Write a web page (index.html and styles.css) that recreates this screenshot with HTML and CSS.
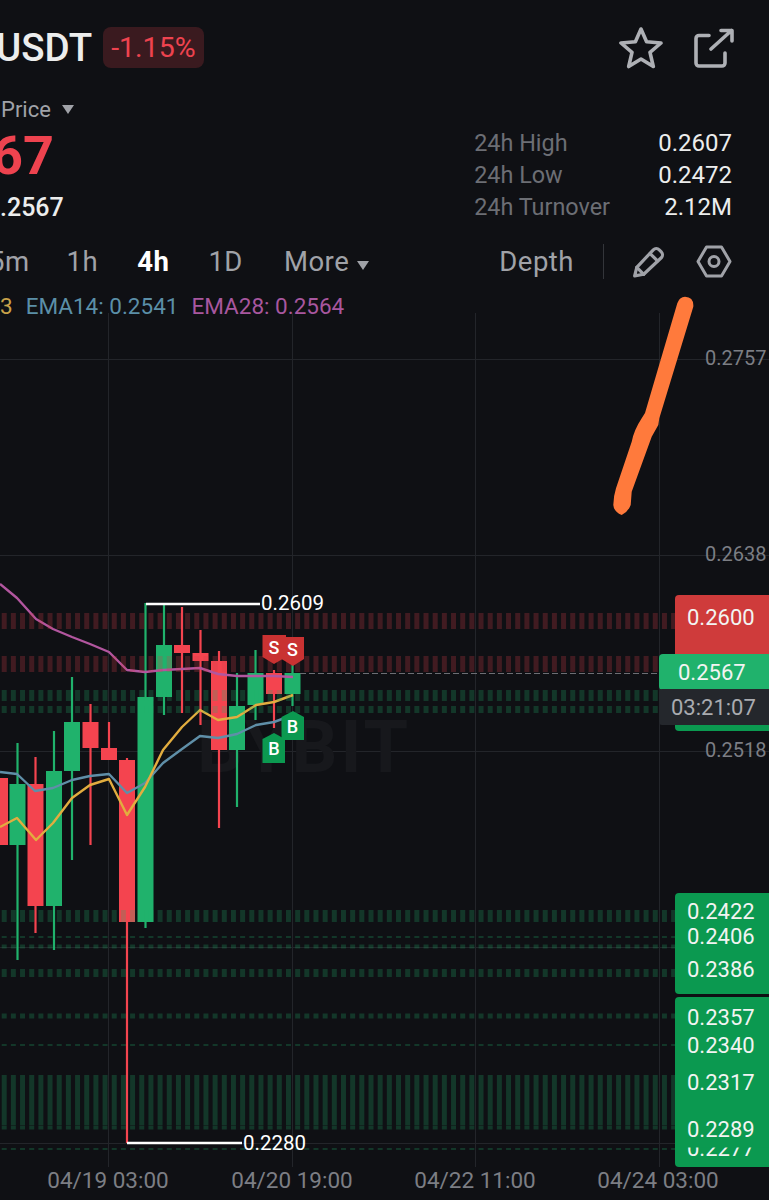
FILE: index.html
```html
<!DOCTYPE html>
<html lang="en">
<head>
  <meta charset="UTF-8">
  <meta name="viewport" content="width=device-width, initial-scale=1.0">
  <title>USDT Chart</title>
  <link rel="stylesheet" href="styles.css">
</head>
<body>
  <!-- Title Bar -->
  <header class="title-bar">
    <div class="pair">
      <h1 class="pair-name">USDT</h1>
      <span class="change-badge">-1.15%</span>
    </div>
    <div class="title-actions">
      <svg class="icon-star" width="46" height="42" viewBox="0 0 46 42">
        <path d="M23 2 L28.6 14.8 L43 16 L32 25.4 L35.3 39.5 L23 32 L10.7 39.5 L14 25.4 L3 16 L17.4 14.8 Z"/>
      </svg>
      <svg class="icon-share" width="40" height="40" viewBox="0 0 40 40">
        <path d="M15 7.5 H5 a3 3 0 0 0 -3 3 V35 a3 3 0 0 0 3 3 H28 a3 3 0 0 0 3 -3 V25"/>
        <path d="M17 21 L37.5 2.5 M27 2.5 H38 V13"/>
      </svg>
    </div>
  </header>

  <!-- Price Summary -->
  <section class="summary">
    <div class="price">
      <div class="price-type">Price <span class="caret"></span></div>
      <div class="price-last">67</div>
      <div class="price-mark">.2567</div>
    </div>
    <dl class="stats">
      <dt>24h High</dt><dd>0.2607</dd>
      <dt>24h Low</dt><dd>0.2472</dd>
      <dt>24h Turnover</dt><dd>2.12M</dd>
    </dl>
  </section>

  <!-- Interval Tabs -->
  <nav class="tabs">
    <span class="tab tab-cut">5m</span>
    <span class="tab">1h</span>
    <span class="tab active">4h</span>
    <span class="tab">1D</span>
    <span class="tab tab-more">More <span class="caret caret-more"></span></span>
    <span class="tab tab-depth">Depth</span>
    <span class="tab-divider"></span>
    <svg class="icon-tool" width="33" height="33" viewBox="0 0 31 31">
      <path d="M2.5 29 L4.5 21 L20 4.5 a4 4 0 0 1 5.6 0 L27.5 6.4 a4 4 0 0 1 0 5.6 L11 27.5 Z"/>
      <path d="M4.5 21 L11 27.5 M17 8 L24 15"/>
    </svg>
    <svg class="icon-tool" width="36" height="33" viewBox="0 0 36 33">
      <path d="M10.5 2 H25.5 L34 16.5 L25.5 31 H10.5 L2 16.5 Z"/>
      <circle cx="18" cy="16.5" r="5"/>
    </svg>
  </nav>

  <!-- Indicator Legend -->
  <div class="legend">
    <span class="ema7">3</span>
    <span class="ema14">EMA14: 0.2541</span>
    <span class="ema28">EMA28: 0.2564</span>
  </div>

  <!-- Chart: viewBox uses page coordinates -->
  <svg class="chart" width="769" height="882" viewBox="0 318 769 882">
    <!-- grid -->
    <g class="grid">
      <line x1="108.5" y1="313" x2="108.5" y2="1167"/>
      <line x1="292.5" y1="313" x2="292.5" y2="1167"/>
      <line x1="475.5" y1="313" x2="475.5" y2="1167"/>
      <line x1="659.5" y1="313" x2="659.5" y2="1167"/>
      <line x1="0" y1="359.5" x2="769" y2="359.5"/>
      <line x1="0" y1="555.5" x2="769" y2="555.5"/>
      <line x1="0" y1="751.5" x2="769" y2="751.5"/>
      <line x1="0" y1="947.5" x2="675" y2="947.5"/>
      <line x1="0" y1="1143.5" x2="675" y2="1143.5"/>
    </g>

    <text class="watermark" x="197" y="772">BYBIT</text>

    <!-- candles -->
    <g class="candle up">
      <line x1="17.5" y1="743" x2="17.5" y2="960"/><rect x="9.5" y="784" width="16" height="61"/>
      <line x1="54" y1="731" x2="54" y2="950"/><rect x="46" y="771" width="16" height="135"/>
      <line x1="72" y1="677" x2="72" y2="860"/><rect x="64" y="722" width="16" height="49"/>
      <line x1="145.5" y1="603" x2="145.5" y2="928"/><rect x="137.5" y="697" width="16" height="225"/>
      <line x1="164" y1="605" x2="164" y2="715"/><rect x="156" y="645" width="16" height="52"/>
      <line x1="237" y1="673" x2="237" y2="807"/><rect x="229" y="706" width="16" height="44"/>
      <line x1="255.5" y1="650" x2="255.5" y2="720"/><rect x="247.5" y="673" width="16" height="32"/>
      <line x1="292.5" y1="665" x2="292.5" y2="706"/><rect x="284.5" y="673" width="16" height="21"/>
    </g>
    <g class="candle down">
      <rect x="-8" y="778" width="16" height="67"/>
      <line x1="35.5" y1="757" x2="35.5" y2="933"/><rect x="27.5" y="784" width="16" height="122"/>
      <line x1="90.5" y1="704" x2="90.5" y2="845"/><rect x="82.5" y="722" width="16" height="26"/>
      <line x1="109" y1="722" x2="109" y2="760"/><rect x="101" y="748" width="16" height="12"/>
      <line x1="127" y1="758" x2="127" y2="1143"/><rect x="119" y="760" width="16" height="162"/>
      <line x1="182" y1="607" x2="182" y2="713"/><rect x="174" y="645" width="16" height="8"/>
      <line x1="200.5" y1="630" x2="200.5" y2="725"/><rect x="192.5" y="653" width="16" height="8"/>
      <line x1="219" y1="651" x2="219" y2="828"/><rect x="211" y="661" width="16" height="89"/>
      <line x1="274" y1="670" x2="274" y2="728"/><rect x="266" y="673" width="16" height="21"/>
    </g>

    <!-- ema lines -->
    <polyline class="line line-ema28" points="0,584 17,598 36,619 53,629 72,637 90,644 109,652 127,670 145,672 163,670 182,669 200,668 218,674 237,676 256,676 274,676 293,677"/>
    <polyline class="line line-ema14" points="0,772 17,774 35,791 53,788 72,780 90,776 109,774 127,793 145,783 163,763 182,749 200,736 218,738 237,734 256,725 274,722 293,715"/>
    <polyline class="line line-ema7" points="0,827 17,818 36,840 53,823 72,798 90,785 109,779 127,815 145,787 163,750 182,727 200,710 218,720 237,717 256,705 274,702 293,695"/>

    <!-- order book bands -->
    <g class="band band-red">
      <line x1="1.7" y1="621" x2="675" y2="621" stroke-width="16"/>
      <line x1="1.7" y1="664" x2="659" y2="664" stroke-width="16"/>
    </g>
    <g class="band band-green">
      <line x1="1.7" y1="695.5" x2="659" y2="695.5" stroke-width="11"/>
      <line x1="1.7" y1="709.5" x2="659" y2="709.5" stroke-width="7"/>
      <line x1="1.7" y1="916" x2="675" y2="916" stroke-width="12"/>
      <line x1="1.7" y1="937" x2="675" y2="937" stroke-width="2"/>
      <line x1="1.7" y1="946.5" x2="675" y2="946.5" stroke-width="4"/>
      <line x1="1.7" y1="973" x2="675" y2="973" stroke-width="8"/>
      <line x1="1.7" y1="1016" x2="675" y2="1016" stroke-width="5"/>
      <line x1="1.7" y1="1045" x2="675" y2="1045" stroke-width="2"/>
      <line x1="1.7" y1="1100" x2="675" y2="1100" stroke-width="50"/>
      <line x1="1.7" y1="1127.5" x2="675" y2="1127.5" stroke-width="4"/>
      <line x1="1.7" y1="1149" x2="675" y2="1149" stroke-width="2"/>
    </g>

    <line class="last-line" x1="300" y1="673.5" x2="659" y2="673.5"/>

    <!-- high and low marks -->
    <g class="extreme">
      <line x1="146" y1="604" x2="260" y2="604"/>
      <text x="261" y="610">0.2609</text>
      <line x1="127" y1="1143" x2="242" y2="1143"/>
      <text x="243" y="1150">0.2280</text>
    </g>

    <!-- trade markers -->
    <g class="marker sell">
      <path d="M262.5 635 H286 V657 L274 664 L262.5 657 Z"/>
      <path d="M281.5 637 H304 V659 L293 666 L281.5 659 Z"/>
      <text x="274" y="654">S</text>
      <text x="292.5" y="656">S</text>
    </g>
    <g class="marker buy">
      <path d="M262.5 739 L274 733 L285 739 V763 H262.5 Z"/>
      <path d="M281.5 717 L293 711 L304 717 V740 H281.5 Z"/>
      <text x="274" y="755">B</text>
      <text x="292.5" y="733">B</text>
    </g>

    <!-- price axis -->
    <g class="axis-y">
      <text x="705" y="365">0.2757</text>
      <text x="705" y="561">0.2638</text>
      <text x="705" y="757">0.2518</text>
    </g>

    <!-- price tags -->
    <rect class="tag-red" x="675" y="595" width="100" height="66" rx="4"/>
    <rect class="tag-green" x="675" y="700" width="100" height="31" rx="4"/>
    <rect class="tag-last" x="659" y="654" width="120" height="36" rx="4"/>
    <rect class="tag-timer" x="659" y="689" width="120" height="36" rx="3"/>
    <rect class="tag-green" x="675" y="893" width="100" height="101" rx="4"/>
    <rect class="tag-green" x="675" y="997" width="100" height="170" rx="4"/>

    <g class="tag-text">
      <text x="687" y="625">0.2600</text>
      <text x="678" y="680">0.2567</text>
      <text class="timer-text" x="671" y="715">03:21:07</text>
      <text x="687" y="919">0.2422</text>
      <text x="687" y="944">0.2406</text>
      <text x="687" y="977">0.2386</text>
      <text x="687" y="1025">0.2357</text>
      <text x="687" y="1053">0.2340</text>
      <text x="687" y="1090">0.2317</text>
      <text x="687" y="1156">0.2277</text>
    </g>
    <rect class="tag-fill" x="680" y="1120" width="89" height="27.5"/>
    <g class="tag-text">
      <text x="687" y="1137">0.2289</text>
    </g>

    <!-- time axis -->
    <g class="axis-x">
      <text x="108" y="1188">04/19 03:00</text>
      <text x="292" y="1188">04/20 19:00</text>
      <text x="475" y="1188">04/22 11:00</text>
      <text x="658" y="1188">04/24 03:00</text>
    </g>

    <!-- hand drawn arrow -->
    <path class="scribble" d="M693.3 306.7 L659.3 418.3 L658.3 425 L651.7 436.7 L631.7 491.7 L630.7 505 Q628 512 621.7 515 Q614 512 613.3 505 Q613.5 496 616 488.3 L631.7 441.7 Q634 430 641.7 418.3 L645 413 L677.3 303.3 Q679.5 296.7 685 296.7 Q694 297 693.3 306.7 Z"/>
  </svg>
</body>
</html>
```

FILE: styles.css
```css
:root {
  --bg: #0f1014;
  --red: #ee434f;
  --green: #20b26c;
  --green-dark: #0b9950;
  --muted: #6c6e74;
  --soft: #a0a2a8;
  --axis: #7c7e84;
  --white: #eceded;
  --font: Roboto, "Liberation Sans", sans-serif;
}

* {
  margin: 0;
  padding: 0;
  box-sizing: border-box;
}

html, body {
  width: 769px;
  height: 1200px;
  overflow: hidden;
}

body {
  background: var(--bg);
  color: var(--white);
  font-family: var(--font);
}

/* Title Bar */
.title-bar {
  display: flex;
  justify-content: space-between;
  align-items: center;
  height: 41px;
  margin-top: 27px;
  padding-right: 35px;
}

.pair {
  display: flex;
  align-items: center;
  gap: 11px;
}

.pair-name {
  margin-left: -4px;
  font-size: 38.5px;
  font-weight: 500;
  line-height: 41px;
}

.change-badge {
  padding: 0 8px;
  font-size: 28.5px;
  line-height: 41px;
  color: var(--red);
  background: #3a1a1f;
  border-radius: 8px;
}

.title-actions {
  display: flex;
  align-items: center;
  gap: 30px;
}

.icon-star path,
.icon-share path,
.icon-tool path,
.icon-tool circle {
  fill: none;
  stroke: #aeb0b5;
  stroke-width: 3.6;
  stroke-linejoin: round;
  stroke-linecap: round;
}

.icon-tool path,
.icon-tool circle {
  stroke: #a0a2a8;
  stroke-width: 3;
}

/* Price Summary */
.summary {
  display: flex;
  justify-content: space-between;
  align-items: flex-end;
  margin-top: 29px;
  padding-right: 37px;
}

.price-type {
  margin-left: 1px;
  font-size: 22px;
  line-height: 26px;
  color: var(--soft);
}

.caret {
  display: inline-block;
  width: 0;
  height: 0;
  margin-left: 6px;
  vertical-align: 3px;
  border-left: 6.5px solid transparent;
  border-right: 6.5px solid transparent;
  border-top: 9px solid var(--soft);
}

.caret-more {
  margin-left: 0;
  vertical-align: 1px;
}

.price-last {
  margin: 8px 0 0 -8px;
  font-size: 54px;
  font-weight: 700;
  line-height: 50px;
  color: var(--red);
}

.price-mark {
  margin-top: 13px;
  font-size: 25px;
  font-weight: 500;
  line-height: 28px;
}

.stats {
  display: grid;
  grid-template-columns: auto 122px;
  grid-auto-rows: 32px;
  align-items: center;
  margin-bottom: -1px;
  font-size: 23.4px;
}

.stats dt {
  color: var(--muted);
}

.stats dd {
  font-size: 24px;
  text-align: right;
}

/* Interval Tabs */
.tabs {
  display: flex;
  align-items: center;
  height: 44px;
  margin-top: 17px;
  padding-right: 37px;
  font-size: 27.5px;
  letter-spacing: 0.5px;
  color: var(--soft);
}

.tab {
  margin-right: 39px;
  white-space: nowrap;
}

.tab-cut {
  margin-left: -11px;
  margin-right: 37px;
}

.tab-more {
  margin-left: 2px;
}

.tab.active {
  font-weight: 700;
  color: #fff;
}

.tab-depth {
  margin-left: auto;
  margin-right: 29px;
}

.tab-divider {
  width: 1px;
  height: 35px;
  margin-right: 28px;
  background: #33353a;
}

.tabs .icon-tool + .icon-tool {
  margin-left: 31px;
}

/* Indicator Legend */
.legend {
  display: flex;
  gap: 13px;
  height: 25px;
  margin-top: 10px;
  margin-left: 0;
  font-size: 22.5px;
  line-height: 26px;
}

.ema7 { color: #c9a24a; }
.ema14 { color: #5b8fa8; }
.ema28 { color: #a8579f; }

/* Chart */
.chart {
  display: block;
  overflow: visible;
}

.grid line {
  stroke: #23252a;
  stroke-width: 1;
}

.watermark {
  font-size: 72px;
  font-weight: 700;
  letter-spacing: 3px;
  fill: #17181c;
}

.candle line {
  stroke-width: 2.2;
}

.candle.up rect { fill: var(--green); }
.candle.up line { stroke: var(--green); }
.candle.down rect { fill: #f4444f; }
.candle.down line { stroke: #f4444f; }

.line {
  fill: none;
  stroke-width: 2.4;
  stroke-linejoin: round;
}

.line-ema28 { stroke: #b2569f; }
.line-ema14 { stroke: #5f8fa8; }
.line-ema7 { stroke: #e2ad3f; }

.band line {
  stroke-dasharray: 5 4.17;
}

.band-red line { stroke: rgba(210, 60, 72, 0.26); }
.band-green line { stroke: rgba(32, 178, 108, 0.24); }

.last-line {
  stroke: #6c6e74;
  stroke-width: 1;
  stroke-dasharray: 6 3;
}

.extreme line {
  stroke: #fff;
  stroke-width: 2.4;
}

.extreme text {
  font-size: 20.5px;
  fill: #fff;
}

.marker text {
  font-size: 18px;
  font-weight: 500;
  fill: #fff;
  text-anchor: middle;
}

.sell path { fill: #c93232; }
.buy path { fill: var(--green-dark); }

.axis-y text {
  font-size: 20px;
  fill: var(--axis);
}

.axis-x text {
  font-size: 22.5px;
  fill: var(--axis);
  text-anchor: middle;
}

.tag-red { fill: #cf3b3b; }
.tag-green { fill: var(--green-dark); }
.tag-fill { fill: var(--green-dark); }
.tag-last { fill: var(--green); }
.tag-timer { fill: #24272c; }

.tag-text text {
  font-size: 22px;
  fill: #f2f4f2;
}

.tag-text .timer-text {
  fill: #a9abb0;
}

.scribble {
  fill: #ff7a3c;
}
```
